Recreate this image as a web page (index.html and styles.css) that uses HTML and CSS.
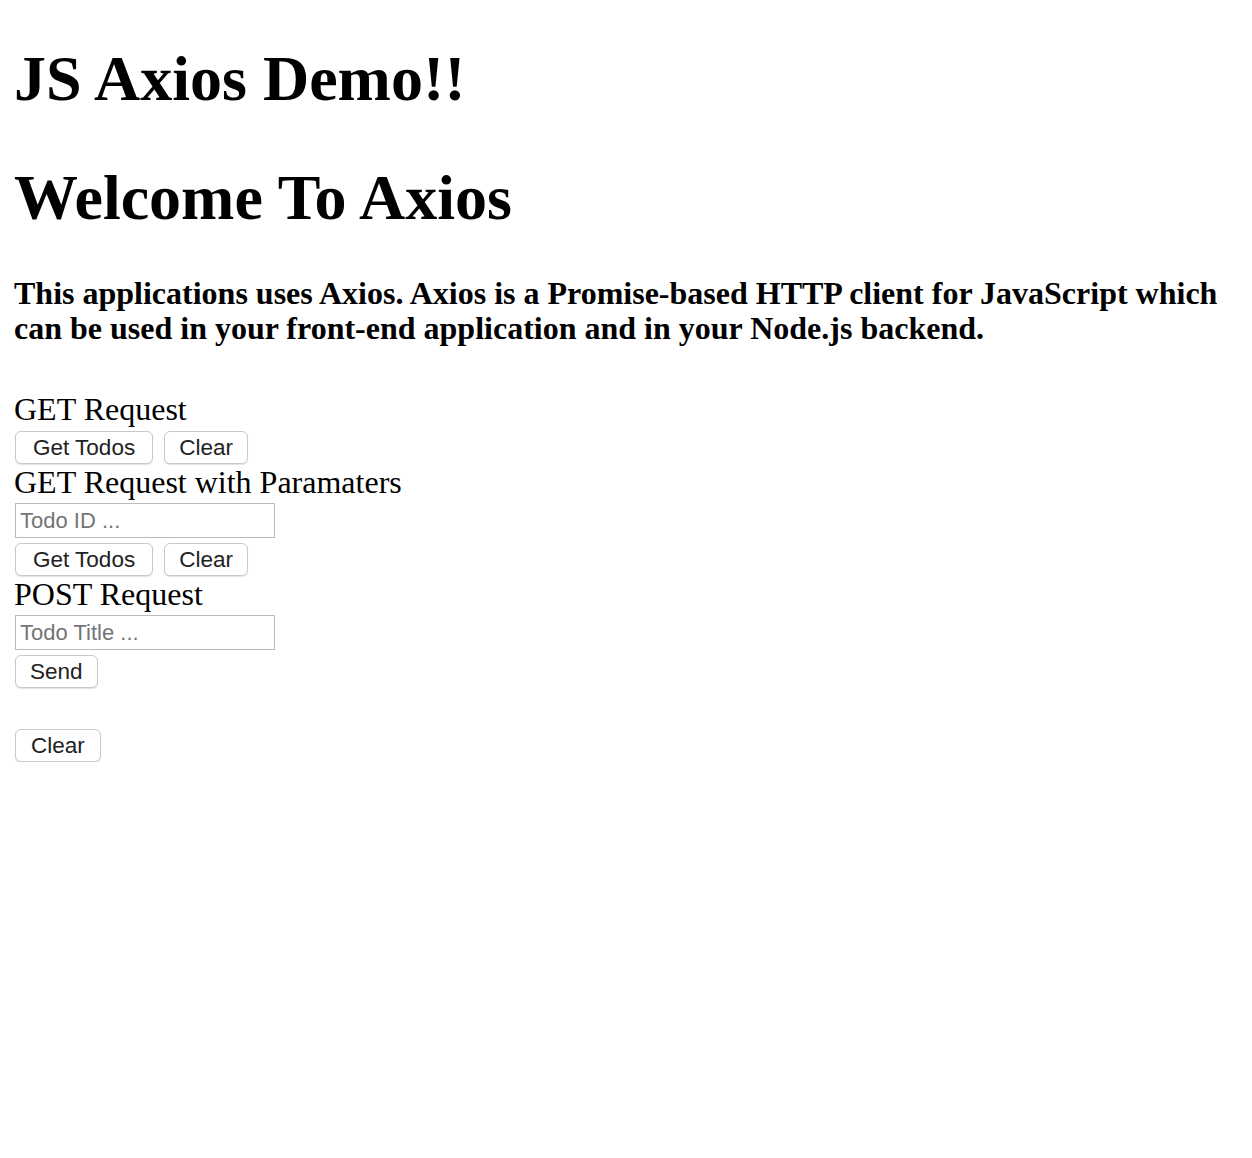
FILE: index.html
```html
<!DOCTYPE html>
<html lang="en">
<head>
<meta charset="utf-8">
<title>JS Axios Demo</title>
<link rel="stylesheet" href="styles.css">
</head>
<body>
<h1 class="title title-first">JS Axios Demo!!</h1>
<h1 class="title title-second">Welcome To Axios</h1>
<h4 class="intro">This applications uses Axios. Axios is a Promise-based HTTP client for JavaScript which can be used in your front-end application and in your Node.js backend.</h4>

<div class="section section-get">
  <div class="label">GET Request</div>
  <div class="btn-row btn-row-first">
    <button class="btn btn-wide">Get Todos</button>
    <button class="btn">Clear</button>
  </div>
</div>

<div class="section">
  <div class="label">GET Request with Paramaters</div>
  <input class="field" type="text" placeholder="Todo ID ...">
  <div class="btn-row">
    <button class="btn btn-wide">Get Todos</button>
    <button class="btn">Clear</button>
  </div>
</div>

<div class="section">
  <div class="label">POST Request</div>
  <input class="field" type="text" placeholder="Todo Title ...">
  <div class="btn-row">
    <button class="btn">Send</button>
  </div>
</div>

<div class="btn-row btn-row-last">
  <button class="btn btn-clear-last">Clear</button>
</div>
</body>
</html>
```

FILE: styles.css
```css
html, body {
  background: #ffffff;
}

body {
  margin: 0;
  padding: 0 14px;
  font-family: "Liberation Serif", "Times New Roman", serif;
  font-size: 32px;
  color: #000000;
}

.title {
  font-size: 64px;
  font-weight: bold;
  line-height: 71px;
  margin: 0;
}

.title-first {
  margin-top: 43px;
}

.title-second {
  margin-top: 48px;
}

.intro {
  font-size: 32px;
  font-weight: bold;
  line-height: 35px;
  margin: 43px 0 0;
}

.section-get {
  margin-top: 45px;
}

.label {
  font-size: 32px;
  line-height: 36px;
}

.btn-row {
  display: flex;
  gap: 11px;
  margin-top: 5px;
  padding-left: 1px;
}

.btn-row-first {
  margin-top: 4px;
}

.btn-row-last {
  margin-top: 41px;
}

.btn {
  box-sizing: border-box;
  height: 33px;
  margin: 0;
  padding: 0 14px;
  font-family: "Liberation Sans", Arial, sans-serif;
  font-size: 22.5px;
  color: #222222;
  background: #ffffff;
  border: 1px solid #c9c9c9;
  border-radius: 6px;
  box-shadow: 0 1px 1px rgba(0, 0, 0, 0.12);
}

.btn-wide {
  padding: 0 17px;
}

.btn-clear-last {
  padding: 0 15px;
}

.field {
  display: block;
  box-sizing: border-box;
  width: 260px;
  height: 35px;
  margin: 3px 0 0 1px;
  padding: 0 4px;
  font-family: "Liberation Sans", Arial, sans-serif;
  font-size: 22px;
  color: #222222;
  background: #ffffff;
  border: 1px solid #bbbbbb;
  border-radius: 0;
  outline: none;
}

.field::placeholder {
  color: #757575;
}
```
